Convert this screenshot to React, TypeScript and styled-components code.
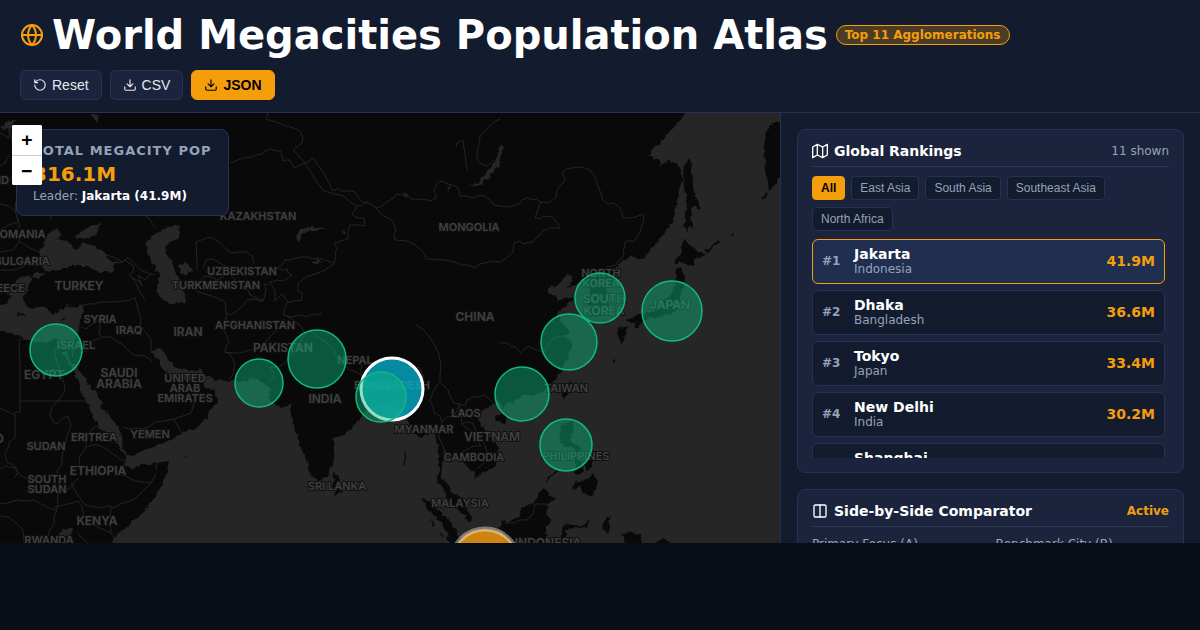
import React, { useState } from "react";
import styled, { createGlobalStyle, css } from "styled-components";

const color = {
  page: "#090d16",
  bar: "#131b2e",
  card: "#1c243d",
  line: "#253256",
  accent: "#f59e0b",
  muted: "#94a3b8",
  text: "#ffffff",
  land: "#090909",
  water: "#262626",
  green: "#10b981",
};
const sans = `"DejaVu Sans", sans-serif`;
const control = `"Liberation Sans", Arial, sans-serif`;

const GlobalStyle = createGlobalStyle`
  * { box-sizing: border-box; }
  body { margin: 0; background: ${color.page}; color: ${color.text}; font-family: ${sans}; overflow: hidden; }
  h1, h2, p, ul { margin: 0; padding: 0; }
`;

const Header = styled.header`
  display: flex;
  flex-direction: column;
  gap: 12px;
  padding: 12px 20px;
  background: ${color.bar};
  border-bottom: 1px solid ${color.line};
`;
const Brand = styled.div`
  display: flex;
  align-items: center;
  gap: 8px;
`;
const Title = styled.h1`
  font-size: 40px;
  line-height: 46px;
  font-weight: 700;
  white-space: nowrap;
`;
const Badge = styled.span`
  padding: 0 8px;
  border: 1px solid ${color.accent};
  border-radius: 10px;
  background: #f59e0b40;
  color: ${color.accent};
  font-size: 12px;
  line-height: 18px;
  font-weight: 700;
  white-space: nowrap;
`;
const Actions = styled.div`
  display: flex;
  gap: 8px;
`;
const ActionButton = styled.button<{ $primary?: boolean }>`
  display: flex;
  align-items: center;
  gap: 5px;
  height: 30px;
  padding: 0 12px;
  border: 1px solid ${(p) => (p.$primary ? color.accent : color.line)};
  border-radius: 6px;
  background: ${(p) => (p.$primary ? color.accent : color.card)};
  color: ${(p) => (p.$primary ? "#000" : "#e2e8f0")};
  font: ${(p) => (p.$primary ? 700 : 400)} 14px ${control};
`;
const Icon = styled.svg<{ $size: number }>`
  flex: none;
  width: ${(p) => p.$size}px;
  height: ${(p) => p.$size}px;
  fill: none;
  stroke: currentColor;
  stroke-width: 2;
  stroke-linecap: round;
  stroke-linejoin: round;
`;
const Globe = styled(Icon)`
  color: ${color.accent};
`;

const Main = styled.main`
  display: grid;
  grid-template-columns: minmax(0, 1fr) 420px;
  height: calc(100vh - 200px);
`;
const MapPane = styled.section`
  position: relative;
  overflow: hidden;
  background: ${color.water};
`;
const MapDrawing = styled.svg`
  display: block;
  width: 100%;
  height: 100%;
`;
const MapLabel = styled.text<{ $size: number }>`
  fill: #404040;
  stroke: #101010;
  stroke-width: 2px;
  paint-order: stroke;
  font: 600 ${(p) => p.$size}px Inter, sans-serif;
  text-anchor: middle;
`;
const Summary = styled.div`
  position: absolute;
  left: 16px;
  top: 16px;
  padding: 12px 16px;
  border: 1px solid ${color.line};
  border-radius: 8px;
  background: ${color.bar};
`;
const SummaryLabel = styled.p`
  color: ${color.muted};
  font-size: 13px;
  line-height: 17px;
  font-weight: 700;
  letter-spacing: 1px;
`;
const SummaryValue = styled.p`
  color: ${color.accent};
  font-size: 20px;
  line-height: 31px;
  font-weight: 700;
`;
const SummaryNote = styled.p`
  color: ${color.muted};
  font-size: 12px;
  line-height: 13px;
  strong { color: ${color.text}; }
`;
const ZoomControl = styled.div`
  position: absolute;
  left: 12px;
  top: 12px;
  display: flex;
  flex-direction: column;
  border-radius: 2px;
  overflow: hidden;
  background: #fff;
`;
const ZoomButton = styled.button`
  width: 30px;
  height: 30px;
  padding: 0;
  border: 0;
  background: #fff;
  color: #000;
  font: 700 18px/30px "DejaVu Sans Mono", monospace;
  & + & { border-top: 1px solid #ccc; }
`;

const Sidebar = styled.aside`
  display: flex;
  flex-direction: column;
  gap: 16px;
  padding: 16px;
  border-left: 1px solid ${color.line};
  background: ${color.bar};
  overflow: hidden;
`;
const Card = styled.section`
  flex: none;
  padding: 14px;
  border: 1px solid ${color.line};
  border-radius: 8px;
  background: ${color.card};
`;
const CardHeader = styled.div`
  display: flex;
  align-items: center;
  justify-content: space-between;
  height: 23px;
  padding-bottom: 8px;
  margin-bottom: 9px;
  border-bottom: 1px solid #2a3550;
`;
const CardTitle = styled.h2`
  display: flex;
  align-items: center;
  gap: 6px;
  font-size: 14px;
  line-height: 16px;
  font-weight: 700;
`;
const CardNote = styled.span<{ $active?: boolean }>`
  font-size: 12px;
  line-height: 14px;
  color: ${(p) => (p.$active ? color.accent : color.muted)};
  font-weight: ${(p) => (p.$active ? 700 : 400)};
`;
const Filters = styled.div`
  display: flex;
  flex-wrap: wrap;
  gap: 7px 6px;
  margin-bottom: 8px;
`;
const Chip = styled.button<{ $on: boolean }>`
  height: 24px;
  padding: 0 8px;
  border: 1px solid ${(p) => (p.$on ? color.accent : color.line)};
  border-radius: 4px;
  background: ${(p) => (p.$on ? color.accent : color.bar)};
  color: ${(p) => (p.$on ? "#000" : color.muted)};
  font: ${(p) => (p.$on ? 700 : 400)} 12px ${control};
`;
const Ranking = styled.ul`
  display: flex;
  flex-direction: column;
  gap: 6px;
  height: 219px;
  padding-right: 4px;
  overflow: hidden;
  list-style: none;
`;
const City = styled.li<{ $selected: boolean }>`
  display: flex;
  flex: none;
  align-items: center;
  padding: 7px 9px;
  border: 1px solid ${color.line};
  border-radius: 6px;
  background: ${color.bar};
  ${(p) => p.$selected && css`
    border-color: ${color.accent};
    background: #202e50;
  `}
`;
const Rank = styled.span`
  width: 32px;
  color: ${color.muted};
  font-size: 12px;
  line-height: 15px;
  font-weight: 700;
`;
const Names = styled.div`
  flex: 1;
`;
const CityName = styled.p`
  font-size: 14px;
  line-height: 15px;
  font-weight: 700;
`;
const Country = styled.p`
  color: ${color.muted};
  font-size: 12px;
  line-height: 14px;
`;
const Population = styled.span`
  color: ${color.accent};
  font-size: 14px;
  line-height: 15px;
  font-weight: 700;
`;
const CompareGrid = styled.div`
  display: grid;
  grid-template-columns: 1fr 1fr;
  gap: 10px;
`;
const Field = styled.label`
  display: flex;
  flex-direction: column;
  gap: 6px;
  color: ${color.muted};
  font-size: 12px;
  line-height: 17px;
`;
const Picker = styled.select`
  height: 30px;
  border: 1px solid ${color.line};
  border-radius: 6px;
  background: ${color.bar};
  color: ${color.text};
`;

const OCEAN =
  "M100 560L113 540 120 532 128 526 135 520 143 513 150 504 156 495 160 488 165 476 167 470 169 461 155 463 149 465 143 465 132 469 125 465 126 457 122 452 115 441 107 434 100 428 92 417 90 405 81 392 80 388 76 376 70 365 63 353 66 352 71 362 77 366 85 378 90 387 97 391 100 400 101 408 107 413 117 425 121 434 122 445 126 456 133 455 145 450 160 445 175 438 183 432 195 429 205 421 208 412 218 400 214 391 203 387 202 373 197 375 190 380 180 381 171 377 163 370 158 360 151 352 158 349 163 350 170 362 180 369 193 371 200 368 205 376 213 380 230 381 245 381 256 379 265 384 271 390 267 397 275 405 280 408 288 406 291 399 291 410 294 425 300 445 305 458 309 468 312 477 318 482 326 476 332 465 334 450 334 438 345 434 355 425 362 416 367 410 378 405 395 406 401 410 406 414 410 424 413 434 420 437 427 435 432 430 437 440 439 455 439 470 437 482 443 488 448 500 455 508 462 514 470 521 472 520 467 508 461 497 452 492 448 484 441 478 442 465 444 450 450 455 457 458 463 463 468 468 474 472 475 479 483 472 495 467 499 458 498 447 490 438 481 425 477 418 484 410 493 403 499 402 503 409 507 403 515 401 522 396 533 396 542 392 550 386 557 377 563 368 568 358 571 348 571 341 564 337 571 333 563 324 557 315 562 308 570 302 574 298 567 297 558 301 556 296 548 293 548 288 555 287 561 282 566 275 572 274 573 280 567 288 574 286 582 282 590 286 587 300 590 316 601 316 608 308 607 295 603 284 612 276 618 266 625 259 630 255 637 259 645 257 652 248 665 232 674 217 677 203 678 190 683 180 681 170 676 164 670 162 667 160 661 166 657 158 648 155 655 147 663 140 668 133 678 124 685 113 690 100H800V114L770 124 765 135 763 150 766 170 769 190 774 186 780 178 800 160V560Z";

const LAKES = [
  "M-12 330L0 331 15 334 22 338 33 341 45 343 52 340 62 342 72 343 76 338 80 325 82 314 82 304 73 308 67 305 62 310 52 314 45 307 38 306 32 310 25 304 22 297 29 291 27 285 33 279 26 276 17 280 12 284 18 288 12 292 6 290 10 300 2 305 -12 302Z",
  "M40 252L45 239 50 232 57 228 61 234 58 239 68 242 76 251 83 243 95 246 108 256 115 265 113 272 100 272 85 266 70 266 60 269 50 271 40 266Z",
  "M74 237L80 232 90 227 101 223 97 233 87 239Z",
  "M30 276L37 272 46 273 39 278Z",
  "M145 243L155 234 170 225 180 226 179 237 166 245 167 255 173 263 176 275 183 287 185 302 172 304 163 300 156 290 160 277 152 262 147 250Z",
  "M179 264L187 263 193 270 187 275 180 273Z",
  "M296 238L300 229 312 227 328 228 314 231 303 232 299 241Z",
  "M311 262L321 259 323 261 314 264Z",
  "M468 184L480 181 489 170 496 158 500 145 504 147 499 166 489 178 477 186Z",
  "M59 533L63 530 72 528 71 537 58 536Z",
  "M0 127L8 122 15 120 11 128 4 130Z",
  "M90 115L94 114 99 118 97 121Z",
  "M341 232L345 230 344 235Z",
  "M448 187L451 186 449 194Z",
  "M403 196L408 194 407 199Z",
];

const ISLANDS = [
  "M685 164L690 159 692 170 693 186 701 211 693 206 689 218 695 230 690 227 687 233 685 224 687 202 684 178Z",
  "M685 238L690 246 698 251 706 255 696 258 693 265 682 262 675 264 674 260 681 255 683 245Z",
  "M677 268L682 267 685 278 684 287 680 295 679 306 674 312 666 316 656 318 649 317 642 322 632 323 626 322 635 315 647 313 655 311 660 303 669 297 674 287Z",
  "M617 327L627 326 625 336 621 345 619 339Z",
  "M632 325L642 320 641 326 635 329Z",
  "M761 197L768 191 767 196 762 199Z",
  "M704 250L720 240 720 242 706 252Z",
  "M727 237L734 232 734 234Z",
  "M567 384L571 381 570 390 565 400 561 393Z",
  "M496 416L503 413 508 416 505 423 497 421Z",
  "M562 424L573 421 573 433 568 440 574 444 583 449 578 452 571 447 564 447 559 438Z",
  "M544 482L557 469 559 470 546 482Z",
  "M575 459L581 461 584 470 580 474 575 473Z",
  "M584 462L592 459 592 467 587 471Z",
  "M572 490L575 482 583 481 586 478 594 473 598 485 592 496 583 494 580 485Z",
  "M500 519L506 523 517 519 522 509 534 502 544 488 549 494 556 499 548 504 546 515 552 521 546 527 546 560H506Z",
  "M561 560L561 533 565 524 581 526 590 519 587 527 565 529 564 560Z",
  "M603 525L607 517 610 515 608 522 610 526 606 533Z",
  "M622 534L632 531 641 537 640 560H630Z",
  "M656 543L662 538 674 543 674 560H656Z",
  "M420 497L432 503 439 512 450 521 456 530 462 540 460 560L441 523 430 511Z",
  "M333 473L338 476 342 485 341 493 336 494 333 487Z",
  "M405 452L407 452 404 467 403 466Z",
  "M431 519L436 525 434 527Z",
  "M439 530L444 538 441 536Z",
  "M182 456L187 456 186 458Z",
  "M613 360L616 358 614 363Z",
  "M60 320L67 317 65 320Z",
  "M17 312L27 316 18 317Z",
  "M499 528L505 520 510 530 505 536Z",
];

const BORDERS = [
  "M230 163L238 160 244 158 251 157 256 155 262 154 265 151 270 149 276 151 281 151 283 161 286 160 290 160 293 166 295 168 300 165 305 163 309 161 313 158 318 165 323 172 328 181 333 191 338 188 341 191 346 191 352 191 355 192 359 198 362 202 368 203 372 205 377 208 382 206 386 202 391 200 397 194 402 195 405 193 409 197 414 200 423 199 431 201 436 198 436 195 434 191 435 188 437 183 441 181 448 184 455 186 458 188 460 196 466 196 473 198 479 195 485 196 490 200 494 205 500 206 508 207 515 205 520 203 522 200 527 198 533 200 536 199 541 202 548 203 556 198 557 191 560 185 564 182 565 178 562 172 567 169 572 168 579 167 585 168 590 170 594 175 598 186 600 191 603 200 608 204 613 203 619 207 622 212 623 218 629 218 636 217 643 214 644 219 642 226 640 232 635 240 632 242 630 240 626 242 624 243 625 247 623 250 624 254 623 257 620 259 616 265 607 267",
  "M541 202L539 206 535 218 540 219 544 216 552 217 556 221 560 228 550 228 547 230 543 230 540 235 536 238 533 242 527 243 523 244 520 241 514 243 513 252 510 255 505 259 500 262 492 261 485 263 480 264 475 268 468 265 462 265 455 262 445 260 427 259 422 251 415 245 407 241 395 240 394 234 396 230 393 222 389 218 385 217 381 214 375 207",
  "M367 200L362 206 357 206 355 210 352 214 357 218 364 218 365 226 359 225 350 225 348 231 348 239 341 241 334 243 337 249 335 253 336 256 334 264 328 268 321 272 312 275 306 277 301 281 298 283 298 291 302 293 302 300 293 301 287 303 285 308 283 315 291 317 300 315 307 317 312 314 318 315 322 313",
  "M334 263L328 261 319 258 312 259 308 257 300 257 293 259 290 260 285 260 283 264 277 268 282 270 288 269 287 272 292 275 287 279 282 281 277 280 270 282 268 285 264 284 266 289 265 295 263 301 259 301 256 299 247 300 243 306 235 312 231 315 226 313 226 309 225 302 215 297 205 294 196 291",
  "M197 270L197 260 196 242 204 239 211 237 220 243 230 253 240 252 246 252 252 256 254 263 M233 268L225 266 218 262 213 259 206 260 203 268",
  "M193 287L205 276 211 277 218 280 228 273 242 286 248 290 250 295 255 297 263 301 M270 282L275 291 275 301 282 294 289 303",
  "M268 113L266 119 276 122 286 126 294 128 300 131 303 138 302 143 297 147 293 150 298 155 305 163 311 172 316 181 324 191 335 194 344 196 350 202 357 206",
  "M0 133L9 138 9 125 15 155 14 168 20 175 20 185 17 197 15 207 18 222 9 225 0 230",
  "M0 204L9 206 14 210 17 216 20 225 16 232 20 240 17 245 13 250 0 252",
  "M50 219L54 208 60 200 64 202 73 192 85 186 97 183M145 216L149 218 155 228",
  "M20 242L30 248 40 252M38 266L28 264 20 268 13 270 0 270",
  "M115 262L120 263 125 260 134 266 133 272 129 275 132 278 135 281 139 290 145 300M132 278L139 281 142 286 138 275 145 280 151 274",
  "M106 255L113 257 119 260 123 262 128 257 135 264 142 271 155 275",
  "M82 314L84 310 82 306 88 304 94 304 100 302 112 302 126 301 130 300 135 298 138 309 141 318 140 325 146 332 151 340 151 350 154 354",
  "M82 327L86 329 89 326 99 320 100 328 99 334 102 337 110 337 122 344 133 355 145 356 152 361",
  "M78 349L83 346 90 343 95 340 100 338M80 354L91 348M75 341L74 348 72 357",
  "M193 371L196 388 194 404 191 413 174 419 181 432M174 419L165 421 155 422 149 427 142 429 138 428 130 429 123 427",
  "M226 313L226 320 224 330 229 342 226 346 225 352 230 354 235 364 234 368 233 374 229 380M225 352L233 353 240 353 250 350 258 350 265 346 267 340 274 333 280 326 284 319",
  "M284 315L293 320 302 327 303 331 306 334 302 337 300 343 297 349 291 356 284 364 278 367 270 367 273 372 275 378 268 382",
  "M309 330L318 337 326 342 334 350 335 355 337 359 343 364 350 370 356 372 363 376 378 377M378 377L385 373 392 374 399 372 405 368 411 367 420 368 424 378 418 384 413 391 411 397 407 399",
  "M362 364L361 370 361 375 364 380 367 384 366 388 365 394 370 399 374 404M384 378L392 379 390 389 385 383",
  "M416 325L424 330 430 338 435 345 439 354 441 365 440 373 440 381 444 386 448 390 450 396 454 403 459 404 465 406 467 400 473 397 479 397 484 395 488 398 492 402",
  "M440 381L434 390 430 400 433 407 434 413 440 416 442 422 439 430 439 438 443 446 445 453",
  "M442 422L447 417 454 416 457 411 459 405 461 414 462 424 467 422 473 423 475 429 478 435 482 440 485 446 487 452 488 458 484 463 478 468",
  "M462 424L472 432 477 439 481 446 474 446 468 449 462 452 461 460 465 465 469 470",
  "M500 343L507 343 512 347 516 347 520 353 525 349 529 346 536 350 544 352 550 341 556 337 563 336 570 338",
  "M20 338L19 350 20 360 20 412 15 412 15 438 9 442 9 446 5 454 7 462 15 466 18 472 15 478M0 408L15 415M20 401H89",
  "M55 347L55 355 58 365 65 386 64 393 60 398 52 407 50 415 53 421 57 424 63 418 68 416 71 426 67 436 65 446 62 455 62 465 57 470 59 480 58 495 57 510",
  "M0 469L5 466 15 468 20 475 30 480 38 482 44 489 53 490 60 492 67 490 70 488 72 484 79 478",
  "M80 470L79 458 84 450 86 447 93 445 98 445 105 448 112 453 120 459 128 462",
  "M86 445L86 438 93 428 99 425M71 483L75 490 80 498 85 505 96 507 102 508 108 506 114 508 120 504 133 500 142 492 151 483 143 482 135 481 127 477 120 474",
  "M0 504L8 503 17 500 25 501 34 500 41 504 49 508 57 510 54 516 54 524 50 530 48 536M0 516L8 517 15 522 23 530 24 543",
  "M55 507L63 505 72 503 78 501 82 506 83 513 87 522 111 533M111 508L110 520 111 533 115 540",
  "M77 533L87 543M151 483L156 474M156 470L157 461",
  "M456 147L457 143 463 140 464 148 465 154 466 163 467 170",
  "M500 119C488 123 486 133 480 136C480 145 473 158 480 163S489 165 493 160",
  "M505 523L513 523 520 520 527 520 533 514 535 504 548 504",
  "M0 166L5 163 9 155M0 180L8 182 13 176",
];

type Label = [string, number, number, number?];
const LABELS: Label[] = [
  ["KAZAKHSTAN", 258, 220], ["MONGOLIA", 469, 231], ["UZBEKISTAN", 242, 275],
  ["TURKMENISTAN", 216, 289], ["TURKEY", 79, 290, 12], ["ROMANIA", 19, 238],
  ["BULGARIA", 22, 265], ["GREECE", 3, 292], ["SYRIA", 100, 323],
  ["IRAQ", 129, 334], ["IRAN", 188, 336, 12], ["AFGHANISTAN", 255, 329],
  ["PAKISTAN", 283, 352, 12], ["CHINA", 475, 321, 12], ["INDIA", 325, 403, 12],
  ["NEPAL", 355, 364], ["BANGLADESH", 392, 389], ["MYANMAR", 424, 433],
  ["LAOS", 466, 417], ["VIETNAM", 492, 441, 12], ["CAMBODIA", 474, 461],
  ["SRI LANKA", 337, 490], ["MALAYSIA", 460, 507], ["INDONESIA", 548, 547, 12],
  ["PHILIPPINES", 576, 460], ["TAIWAN", 566, 392], ["NORTH", 601, 277],
  ["KOREA", 601, 287], ["SOUTH", 604, 303, 12], ["KOREA", 604, 315, 12],
  ["JAPAN", 670, 309, 12], ["ISRAEL", 76, 349], ["EGYPT", 44, 379, 12],
  ["SAUDI", 119, 377, 12], ["ARABIA", 119, 388, 12], ["UNITED", 185, 382],
  ["ARAB", 185, 392], ["EMIRATES", 185, 402], ["ERITREA", 94, 441],
  ["YEMEN", 150, 438], ["SUDAN", 46, 450], ["ETHIOPIA", 98, 475, 12],
  ["SOUTH", 47, 483], ["SUDAN", 47, 493], ["KENYA", 97, 525, 12],
  ["RWANDA", 49, 544], ["POLAND", -14, 184], ["CHAD", -14, 443, 12],
];

const MARKERS = [
  { name: "Tokyo", x: 672, y: 311, r: 30 },
  { name: "New Delhi", x: 317, y: 359, r: 29 },
  { name: "Shanghai", x: 569, y: 342, r: 28 },
  { name: "Guangzhou", x: 522, y: 394, r: 27 },
  { name: "Cairo", x: 56, y: 350, r: 26 },
  { name: "Manila", x: 566, y: 445, r: 26 },
  { name: "Kolkata", x: 381, y: 397, r: 25 },
  { name: "Seoul", x: 600, y: 298, r: 25 },
  { name: "Karachi", x: 259, y: 383, r: 24 },
];

function AsiaMap() {
  return (
    <MapDrawing viewBox="0 113 780 430" preserveAspectRatio="xMinYMin slice" role="img" aria-label="Megacities map">
      <defs>
        <filter id="coast" filterUnits="userSpaceOnUse" x="-10" y="103" width="800" height="450" colorInterpolationFilters="sRGB">
          <feTurbulence type="fractalNoise" baseFrequency="0.16" numOctaves="2" seed="4" />
          <feDisplacementMap in="SourceGraphic" scale="6" xChannelSelector="R" yChannelSelector="G" />
        </filter>
      </defs>
      <g filter="url(#coast)">
        <rect x="-20" y="93" width="820" height="470" fill={color.land} />
        <path d={OCEAN} fill={color.water} />
        {LAKES.map((d) => <path key={d} d={d} fill={color.water} />)}
        {ISLANDS.map((d) => <path key={d} d={d} fill={color.land} />)}
      </g>
      {BORDERS.map((d) => <path key={d} d={d} fill="none" stroke="#242424" />)}
      {LABELS.map(([text, x, y, size = 11]) => (
        <MapLabel key={text + x + y} x={x} y={y} $size={size}>{text}</MapLabel>
      ))}
      <circle cx="485" cy="563" r="34" fill={color.accent} fillOpacity="0.8" stroke="#fff" strokeOpacity="0.4" strokeWidth="5" />
      <circle cx="392" cy="389" r="31" fill="#06b6d4" fillOpacity="0.75" stroke="#fff" strokeWidth="3" />
      {MARKERS.map((m) => (
        <circle key={m.name} cx={m.x} cy={m.y} r={m.r} fill={color.green} fillOpacity="0.45" stroke={color.green} strokeWidth="1.5" />
      ))}
    </MapDrawing>
  );
}

const DownloadIcon = () => (
  <Icon $size={14} viewBox="0 0 24 24" aria-hidden>
    <path d="M21 15v4a2 2 0 0 1-2 2H5a2 2 0 0 1-2-2v-4M7 10l5 5 5-5M12 15V3" />
  </Icon>
);

const REGIONS = ["All", "East Asia", "South Asia", "Southeast Asia", "North Africa"];
const CITIES = [
  ["Jakarta", "Indonesia", "41.9M"],
  ["Dhaka", "Bangladesh", "36.6M"],
  ["Tokyo", "Japan", "33.4M"],
  ["New Delhi", "India", "30.2M"],
  ["Shanghai", "China", "29.6M"],
];

export default function App() {
  const [region, setRegion] = useState("All");
  return (
    <>
      <GlobalStyle />
      <Header>
        <Brand>
          <Globe $size={24} viewBox="0 0 24 24" aria-hidden>
            <circle cx="12" cy="12" r="10" />
            <path d="M2 12h20M12 2a15.3 15.3 0 0 1 4 10 15.3 15.3 0 0 1-4 10 15.3 15.3 0 0 1-4-10 15.3 15.3 0 0 1 4-10z" />
          </Globe>
          <Title>World Megacities Population Atlas</Title>
          <Badge>Top 11 Agglomerations</Badge>
        </Brand>
        <Actions>
          <ActionButton>
            <Icon $size={14} viewBox="0 0 24 24" aria-hidden>
              <path d="M3 12a9 9 0 1 0 9-9 9.75 9.75 0 0 0-6.74 2.74L3 8M3 3v5h5" />
            </Icon>
            Reset
          </ActionButton>
          <ActionButton><DownloadIcon />CSV</ActionButton>
          <ActionButton $primary><DownloadIcon />JSON</ActionButton>
        </Actions>
      </Header>
      <Main>
        <MapPane>
          <AsiaMap />
          <Summary>
            <SummaryLabel>TOTAL MEGACITY POP</SummaryLabel>
            <SummaryValue>316.1M</SummaryValue>
            <SummaryNote>Leader: <strong>Jakarta (41.9M)</strong></SummaryNote>
          </Summary>
          <ZoomControl>
            <ZoomButton aria-label="Zoom in">+</ZoomButton>
            <ZoomButton aria-label="Zoom out">−</ZoomButton>
          </ZoomControl>
        </MapPane>
        <Sidebar>
          <Card>
            <CardHeader>
              <CardTitle>
                <Icon $size={16} viewBox="0 0 24 24" aria-hidden>
                  <path d="M1 6v16l7-4 8 4 7-4V2l-7 4-8-4-7 4zM8 2v16M16 6v16" />
                </Icon>
                Global Rankings
              </CardTitle>
              <CardNote>11 shown</CardNote>
            </CardHeader>
            <Filters>
              {REGIONS.map((r) => (
                <Chip key={r} $on={r === region} onClick={() => setRegion(r)}>{r}</Chip>
              ))}
            </Filters>
            <Ranking>
              {CITIES.map(([name, country, population], i) => (
                <City key={name} $selected={i === 0}>
                  <Rank>#{i + 1}</Rank>
                  <Names>
                    <CityName>{name}</CityName>
                    <Country>{country}</Country>
                  </Names>
                  <Population>{population}</Population>
                </City>
              ))}
            </Ranking>
          </Card>
          <Card>
            <CardHeader>
              <CardTitle>
                <Icon $size={16} viewBox="0 0 24 24" aria-hidden>
                  <rect x="3" y="3" width="18" height="18" rx="2" />
                  <path d="M12 3v18" />
                </Icon>
                Side-by-Side Comparator
              </CardTitle>
              <CardNote $active>Active</CardNote>
            </CardHeader>
            <CompareGrid>
              <Field>
                Primary Focus (A)
                <Picker defaultValue="Jakarta">{CITIES.map(([n]) => <option key={n}>{n}</option>)}</Picker>
              </Field>
              <Field>
                Benchmark City (B)
                <Picker defaultValue="Dhaka">{CITIES.map(([n]) => <option key={n}>{n}</option>)}</Picker>
              </Field>
            </CompareGrid>
          </Card>
        </Sidebar>
      </Main>
    </>
  );
}
